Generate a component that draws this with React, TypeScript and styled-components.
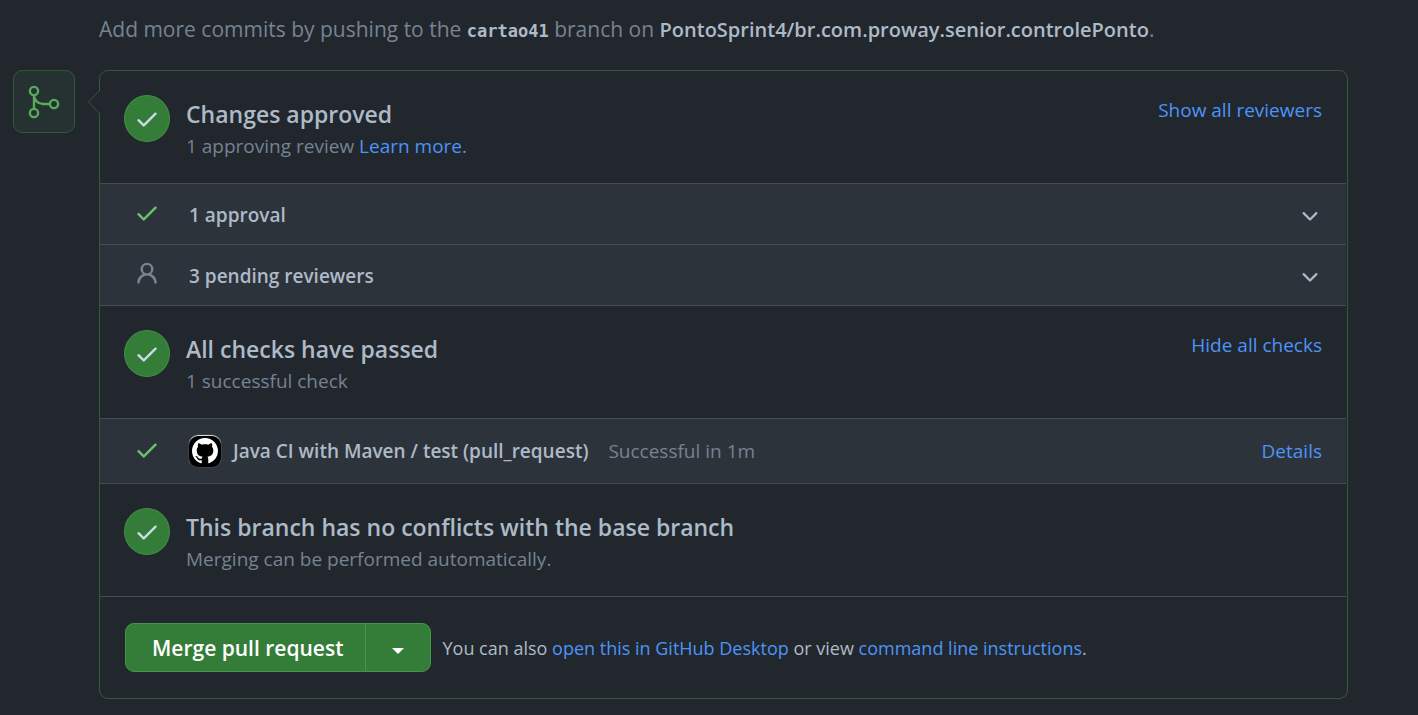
import React from "react";
import styled, { createGlobalStyle } from "styled-components";

const sans = `"Open Sans", "Noto Sans", sans-serif`;
const mono = `"DejaVu Sans Mono", monospace`;

const GlobalStyle = createGlobalStyle`
  * { box-sizing: border-box; }
  body {
    margin: 0;
    background: #22272e;
    color: #adbac7;
    font: 400 19px/30px ${sans};
  }
`;

const Page = styled.main`
  padding: 13px 70px 16px 13px;
`;

const PushHint = styled.p`
  margin: 0 0 24px 86px;
  font-size: 21px;
  line-height: 32px;
  color: #768390;
`;

const BranchName = styled.code`
  font: 700 17px/30px ${mono};
  color: #adbac7;
`;

const Strong = styled.strong`
  font-size: 20px;
  font-weight: 600;
  line-height: 30px;
  color: #adbac7;
`;

const Timeline = styled.div`
  display: flex;
  align-items: flex-start;
  gap: 24px;
`;

const MergeBadge = styled.div`
  display: grid;
  place-items: center;
  flex: none;
  width: 62px;
  height: 63px;
  border: 1px solid #2f5738;
  border-radius: 9px;
  background: #263231;
  color: #57ab5a;
`;

const Box = styled.section`
  position: relative;
  flex: 1;
  min-width: 0;
  padding-right: 1px;
  border: 1px solid #35583d;
  border-radius: 9px;
`;

const Pointer = styled.svg`
  position: absolute;
  top: 19px;
  left: -12px;
`;

const Section = styled.div`
  display: flex;
  align-items: flex-start;
  gap: 16px;
  min-height: 112px;
  padding: 24px;
`;

const StatusCircle = styled.span`
  display: grid;
  place-items: center;
  flex: none;
  width: 46px;
  height: 47px;
  border: 1px solid #409045;
  border-radius: 50%;
  background: #347d39;
  color: #cdd9e5;
`;

const SectionText = styled.div`
  flex: 1;
`;

const Title = styled.h3`
  margin: 0;
  font-size: 23px;
  font-weight: 600;
  line-height: 38px;
`;

const Subtitle = styled.p`
  margin: 0;
  line-height: 26px;
  color: #768390;
`;

const Link = styled.a`
  color: #4c94f8;
  text-decoration: none;
`;

const LinkButton = styled.button`
  padding: 0;
  border: 0;
  background: none;
  color: #4c94f8;
  font: inherit;
  cursor: pointer;
`;

const CheckRow = styled.div`
  display: flex;
  align-items: center;
  height: 65px;
  padding: 0 24px;
  border-top: 1px solid #444c56;
  background: #2d333b;
`;

const ToggleRow = styled.button`
  display: flex;
  align-items: center;
  width: 100%;
  height: 61px;
  padding: 1px 24px 0;
  border: 0;
  border-top: 1px solid #444c56;
  background: #2d333b;
  color: #adbac7;
  font: 600 19px/30px ${sans};
  text-align: left;
  cursor: pointer;
`;

const RowIcon = styled.span<{ $tone: string }>`
  display: grid;
  place-items: center;
  flex: none;
  width: 46px;
  margin-right: 19px;
  padding-bottom: 3px;
  color: ${(p) => p.$tone};
`;

const RowLabel = styled.span`
  flex: 1;
`;

const Avatar = styled.span`
  display: grid;
  place-items: center;
  width: 32px;
  height: 32px;
  margin-right: 12px;
  border-radius: 9px;
  background: #000;
  color: #fff;
  box-shadow: 0 0 0 1px #3a4149, inset 0 1px 0 #d8dbde;
`;

const CheckName = styled.strong`
  margin-right: 20px;
  font-weight: 600;
`;

const CheckResult = styled.span`
  flex: 1;
  color: #768390;
`;

const Divided = styled.div`
  border-top: 1px solid #444c56;
`;

const Actions = styled.div`
  display: flex;
  align-items: center;
  gap: 12px;
  padding: 26px 25px;
`;

const ButtonGroup = styled.div`
  display: flex;
  flex: none;
`;

const MergeButton = styled.button`
  height: 49px;
  padding: 0 21px 0 26px;
  border: 1px solid #46954a;
  border-radius: 9px 0 0 9px;
  background: #347d39;
  color: #fff;
  font: 600 21px/32px ${sans};
  cursor: pointer;
`;

const MenuButton = styled.button`
  display: grid;
  place-items: center;
  width: 66px;
  height: 49px;
  margin-left: -1px;
  padding: 6px 0 0;
  border: 1px solid #46954a;
  border-radius: 0 9px 9px 0;
  background: #347d39;
  color: #fff;
  cursor: pointer;
`;

const Alternatives = styled.p`
  margin: 0;
  font-size: 18px;
`;

const paths = {
  check:
    "M13.78 4.22a.75.75 0 010 1.06l-7.25 7.25a.75.75 0 01-1.06 0L2.22 9.28a.75.75 0 011.06-1.06L6 10.94l6.72-6.72a.75.75 0 011.06 0z",
  person:
    "M10.5 5a2.5 2.5 0 11-5 0 2.5 2.5 0 015 0zm.061 3.073a4 4 0 10-5.123 0 6.004 6.004 0 00-3.431 5.142.75.75 0 001.498.07 4.5 4.5 0 018.99 0 .75.75 0 101.498-.07 6.005 6.005 0 00-3.432-5.142z",
  chevron:
    "M12.78 6.22a.75.75 0 010 1.06l-4.25 4.25a.75.75 0 01-1.06 0L3.22 7.28a.75.75 0 011.06-1.06L8 9.94l3.72-3.72a.75.75 0 011.06 0z",
  github:
    "M8 0C3.58 0 0 3.58 0 8c0 3.54 2.29 6.53 5.47 7.59.4.07.55-.17.55-.38 0-.19-.01-.82-.01-1.49-2.01.37-2.53-.49-2.69-.94-.09-.23-.48-.94-.82-1.13-.28-.15-.68-.52-.01-.53.63-.01 1.08.58 1.23.82.72 1.21 1.87.87 2.33.66.07-.52.28-.87.51-1.07-1.78-.2-3.64-.89-3.64-3.95 0-.87.31-1.59.82-2.15-.08-.2-.36-1.02.08-2.12 0 0 .67-.21 2.2.82.64-.18 1.32-.27 2-.27.68 0 1.36.09 2 .27 1.53-1.04 2.2-.82 2.2-.82.44 1.1.16 1.92.08 2.12.51.56.82 1.27.82 2.15 0 3.07-1.87 3.75-3.65 3.95.29.25.54.73.54 1.48 0 1.07-.01 1.93-.01 2.2 0 .21.15.46.55.38A8.013 8.013 0 0016 8c0-4.42-3.58-8-8-8z",
};

function Icon({ name, size = 26 }: { name: keyof typeof paths; size?: number }) {
  return (
    <svg width={size} height={size} viewBox="0 0 16 16" fill="currentColor" aria-hidden="true">
      <path fillRule="evenodd" d={paths[name]} />
    </svg>
  );
}

function MergeIcon() {
  return (
    <svg width="38" height="38" viewBox="0 0 38 38" fill="none" stroke="currentColor" strokeWidth="2.4" aria-hidden="true">
      <circle cx="9" cy="8" r="4.1" />
      <circle cx="9" cy="30" r="4.1" />
      <circle cx="29" cy="21" r="4.1" />
      <path d="M9 12v14M9 12c0 5 4 9 9 9h7" />
    </svg>
  );
}

function StatusSection({ title, detail, action }: { title: string; detail: React.ReactNode; action?: string }) {
  return (
    <Section>
      <StatusCircle><Icon name="check" /></StatusCircle>
      <SectionText>
        <Title>{title}</Title>
        <Subtitle>{detail}</Subtitle>
      </SectionText>
      {action && <LinkButton type="button">{action}</LinkButton>}
    </Section>
  );
}

function ReviewerRow({ icon, tone, label }: { icon: "check" | "person"; tone: string; label: string }) {
  return (
    <ToggleRow type="button" aria-expanded="false">
      <RowIcon $tone={tone}><Icon name={icon} /></RowIcon>
      <RowLabel>{label}</RowLabel>
      <Icon name="chevron" size={24} />
    </ToggleRow>
  );
}

export default function App() {
  return (
    <Page>
      <GlobalStyle />
      <PushHint>
        Add more commits by pushing to the <BranchName>cartao41</BranchName> branch on{" "}
        <Strong>PontoSprint4/br.com.proway.senior.controlePonto</Strong>.
      </PushHint>
      <Timeline>
        <MergeBadge><MergeIcon /></MergeBadge>
        <Box>
          <Pointer width="12" height="24" viewBox="0 0 12 24" aria-hidden="true">
            <path d="M12 0L0.5 12L12 24" fill="#22272e" stroke="#35583d" />
          </Pointer>
          <StatusSection
            title="Changes approved"
            detail={<>1 approving review <Link href="#reviews">Learn more.</Link></>}
            action="Show all reviewers"
          />
          <ReviewerRow icon="check" tone="#6bc46d" label="1 approval" />
          <ReviewerRow icon="person" tone="#768390" label="3 pending reviewers" />
          <Divided>
            <StatusSection title="All checks have passed" detail="1 successful check" action="Hide all checks" />
          </Divided>
          <CheckRow>
            <RowIcon $tone="#6bc46d"><Icon name="check" /></RowIcon>
            <Avatar><Icon name="github" /></Avatar>
            <CheckName>Java CI with Maven / test (pull_request)</CheckName>
            <CheckResult>Successful in 1m</CheckResult>
            <Link href="#details">Details</Link>
          </CheckRow>
          <Divided>
            <StatusSection
              title="This branch has no conflicts with the base branch"
              detail="Merging can be performed automatically."
            />
          </Divided>
          <Divided>
            <Actions>
              <ButtonGroup>
                <MergeButton type="button">Merge pull request</MergeButton>
                <MenuButton type="button" aria-label="Select merge method">
                  <svg width="12" height="6" viewBox="0 0 12 6" fill="currentColor" aria-hidden="true">
                    <path d="M0 0h12L6 6z" />
                  </svg>
                </MenuButton>
              </ButtonGroup>
              <Alternatives>
                You can also <Link href="#desktop">open this in GitHub Desktop</Link> or view{" "}
                <Link href="#cli">command line instructions</Link>.
              </Alternatives>
            </Actions>
          </Divided>
        </Box>
      </Timeline>
    </Page>
  );
}
